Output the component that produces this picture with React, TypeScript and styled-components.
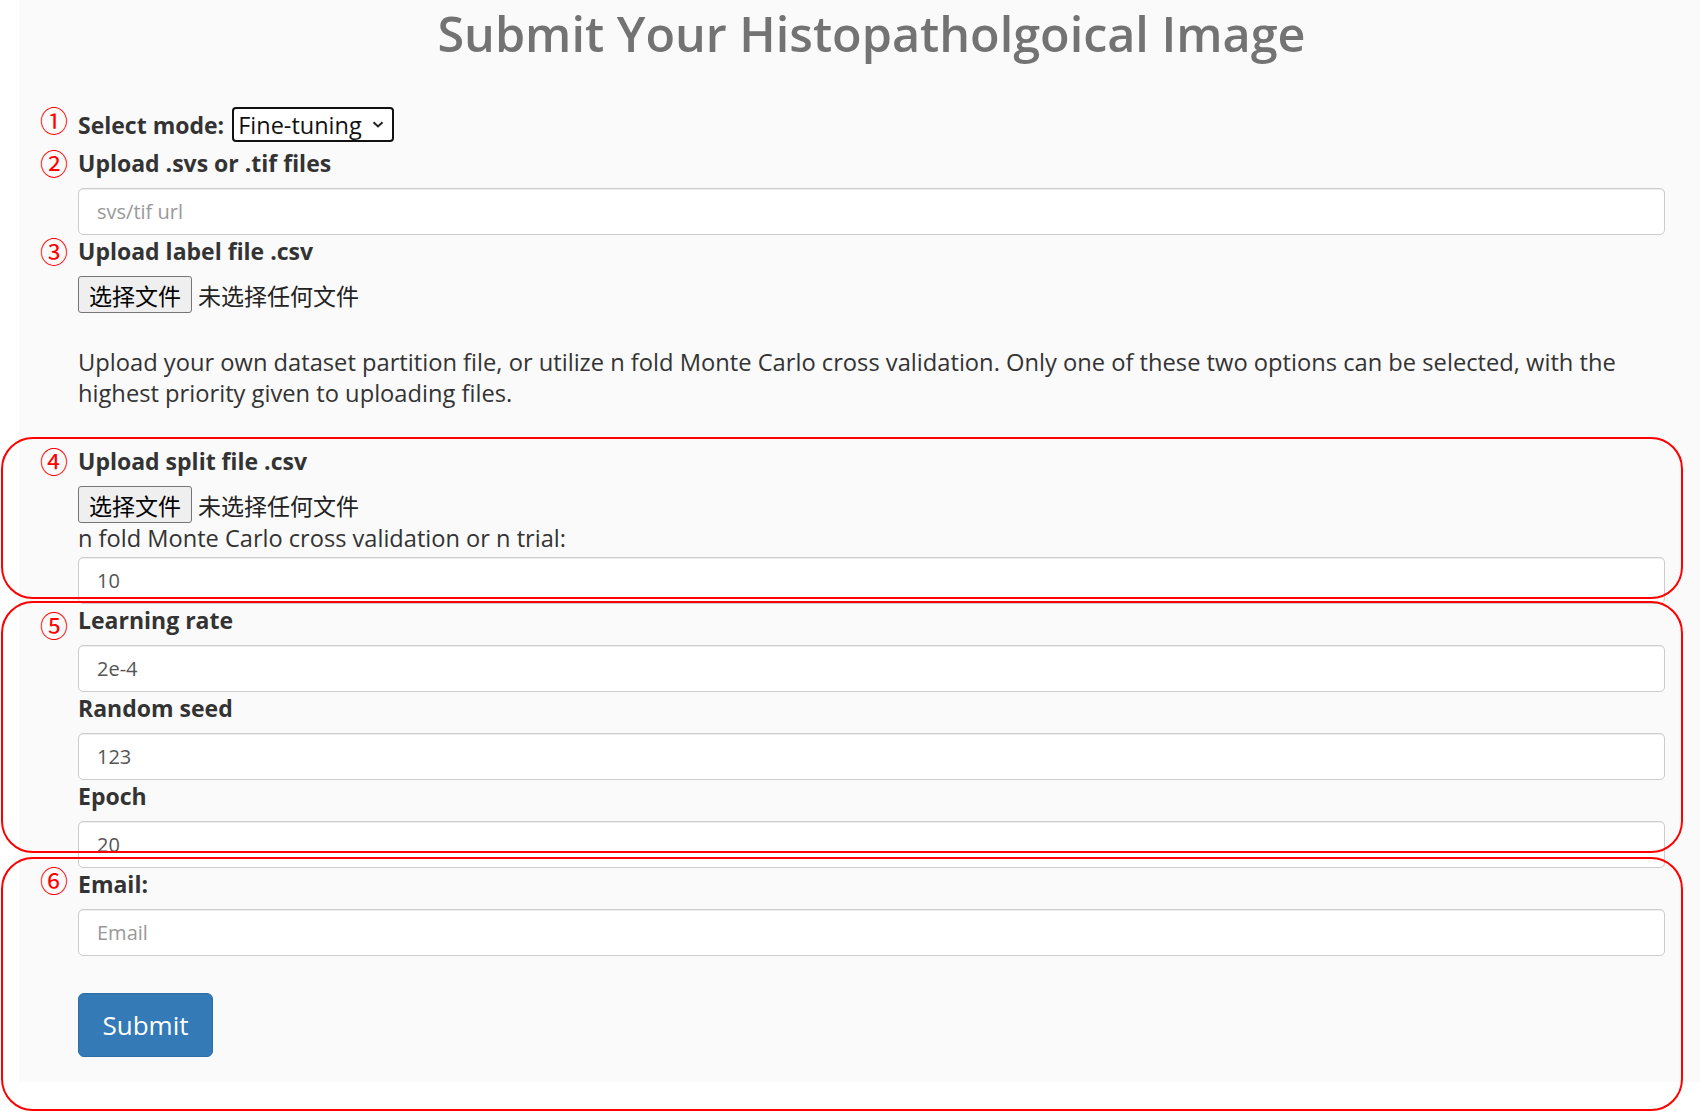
import styled, { createGlobalStyle } from 'styled-components'

const GlobalStyle = createGlobalStyle`
  html, body {
    margin: 0;
    padding: 0;
    background: #ffffff;
  }
  body {
    font-family: "Open Sans", "Noto Sans CJK SC", sans-serif;
    color: #333;
    overflow: hidden;
  }
  * {
    box-sizing: border-box;
  }
`

const annotations = [
  { top: 437, height: 162 },
  { top: 601, height: 252 },
  { top: 857, height: 254 },
]

const App = () => {
  return (
    <Page>
      <GlobalStyle />
      <Panel>
        <Title>Submit Your Histopatholgoical Image</Title>

        <ModeRow>
          <Label as="span" $inline>
            <Marker $shift={-3}>①</Marker>
            Select mode:
          </Label>
          <SelectWrap>
            <Select defaultValue="fine">
              <option value="fine">Fine-tuning</option>
              <option value="linear">Linear probe</option>
            </Select>
            <Chevron width="12" height="7" viewBox="0 0 12 7">
              <polyline points="1.5,1.2 6,5.4 10.5,1.2" />
            </Chevron>
          </SelectWrap>
        </ModeRow>

        <Label $top={5}>
          <Marker $shift={2}>②</Marker>
          Upload .svs or .tif files
        </Label>
        <TextInput placeholder="svs/tif url" />

        <Label>
          <Marker $shift={2}>③</Marker>
          Upload label file .csv
        </Label>
        <FileRow>
          <FileButton type="button">选择文件</FileButton>
          <FileName>未选择任何文件</FileName>
        </FileRow>

        <Note>
          Upload your own dataset partition file, or utilize n fold Monte Carlo cross validation. Only
          one of these two options can be selected, with the highest priority given to uploading
          files.
        </Note>

        <Label>
          <Marker $shift={2}>④</Marker>
          Upload split file .csv
        </Label>
        <FileRow>
          <FileButton type="button">选择文件</FileButton>
          <FileName>未选择任何文件</FileName>
        </FileRow>
        <HelpText>n fold Monte Carlo cross validation or n trial:</HelpText>
        <TextInput defaultValue="10" />

        <Label>
          <Marker $shift={7}>⑤</Marker>
          Learning rate
        </Label>
        <TextInput defaultValue="2e-4" />

        <Label>Random seed</Label>
        <TextInput defaultValue="123" />

        <Label>Epoch</Label>
        <TextInput defaultValue="20" />

        <Label>
          <Marker $shift={-2}>⑥</Marker>
          Email:
        </Label>
        <TextInput type="email" placeholder="Email" />

        <SubmitButton type="submit">Submit</SubmitButton>
      </Panel>

      {annotations.map((box) => (
        <Annotation key={box.top} $top={box.top} $height={box.height} />
      ))}
    </Page>
  )
}

const Page = styled.div`
  position: relative;
  width: 1700px;
  height: 1112px;
  padding-left: 19px;
  overflow: hidden;
  background: #ffffff;
`

const Panel = styled.form`
  width: 1705px;
  padding: 6px 59px 25px;
  background: #fafafa;
`

const Title = styled.h1`
  margin: 0 0 46px;
  text-align: center;
  font-size: 48.5px;
  line-height: 55px;
  font-weight: 600;
  color: #737373;
`

const ModeRow = styled.div`
  display: flex;
  align-items: center;
  gap: 8px;
  height: 35px;
`

const Label = styled.label<{ $top?: number; $inline?: boolean }>`
  position: relative;
  display: block;
  margin: ${(p) => (p.$inline ? '0' : `${p.$top ?? 0}px 0 9px`)};
  font-size: 23px;
  line-height: 32px;
  font-weight: 700;
  color: #333;
`

const Marker = styled.span<{ $shift: number }>`
  position: absolute;
  left: -38px;
  top: ${(p) => p.$shift}px;
  font-family: "Noto Sans CJK SC", sans-serif;
  font-size: 28px;
  line-height: 28px;
  font-weight: 400;
  color: #ff0000;
`

const SelectWrap = styled.div`
  position: relative;
  width: 162px;
  height: 35px;
`

const Select = styled.select`
  appearance: none;
  width: 100%;
  height: 100%;
  padding: 0 20px 0 4px;
  border: 2px solid #111;
  border-radius: 4px;
  background: #ffffff;
  font-family: "Open Sans", sans-serif;
  font-size: 23.5px;
  color: #111;
  outline: none;
`

const Chevron = styled.svg`
  position: absolute;
  right: 10px;
  top: 14px;
  fill: none;
  stroke: #222;
  stroke-width: 2;
  pointer-events: none;
`

const TextInput = styled.input`
  display: block;
  width: 100%;
  height: 47px;
  padding: 0 18px;
  border: 1px solid #cccccc;
  border-radius: 5px;
  background: #ffffff;
  box-shadow: inset 0 1px 1px rgba(0, 0, 0, 0.075);
  font-family: "Open Sans", sans-serif;
  font-size: 20px;
  color: #555555;
  outline: none;

  &::placeholder {
    color: #999999;
  }
`

const FileRow = styled.div`
  display: flex;
  align-items: center;
  gap: 6px;
  height: 37px;
`

const FileButton = styled.button`
  height: 37px;
  padding: 0 10px;
  border: 1px solid #767676;
  border-radius: 3px;
  background: #efefef;
  font-family: "Noto Sans CJK SC", sans-serif;
  font-size: 23px;
  color: #000;
`

const FileName = styled.span`
  font-family: "Noto Sans CJK SC", sans-serif;
  font-size: 23px;
  color: #222;
`

const Note = styled.p`
  margin: 34px 0 36px;
  font-size: 23.7px;
  line-height: 31px;
  color: #333;
`

const HelpText = styled.div`
  margin-bottom: 3px;
  font-size: 23.6px;
  line-height: 31px;
  color: #333;
`

const SubmitButton = styled.button`
  display: block;
  width: 135px;
  height: 64px;
  margin-top: 37px;
  border: 1px solid #2e6da4;
  border-radius: 6px;
  background: #337ab7;
  font-family: "Open Sans", sans-serif;
  font-size: 26px;
  color: #ffffff;
`

const Annotation = styled.div<{ $top: number; $height: number }>`
  position: absolute;
  left: 1px;
  top: ${(p) => p.$top}px;
  width: 1682px;
  height: ${(p) => p.$height}px;
  border: 2px solid #ff0000;
  border-radius: 32px;
  pointer-events: none;
`

export default App
